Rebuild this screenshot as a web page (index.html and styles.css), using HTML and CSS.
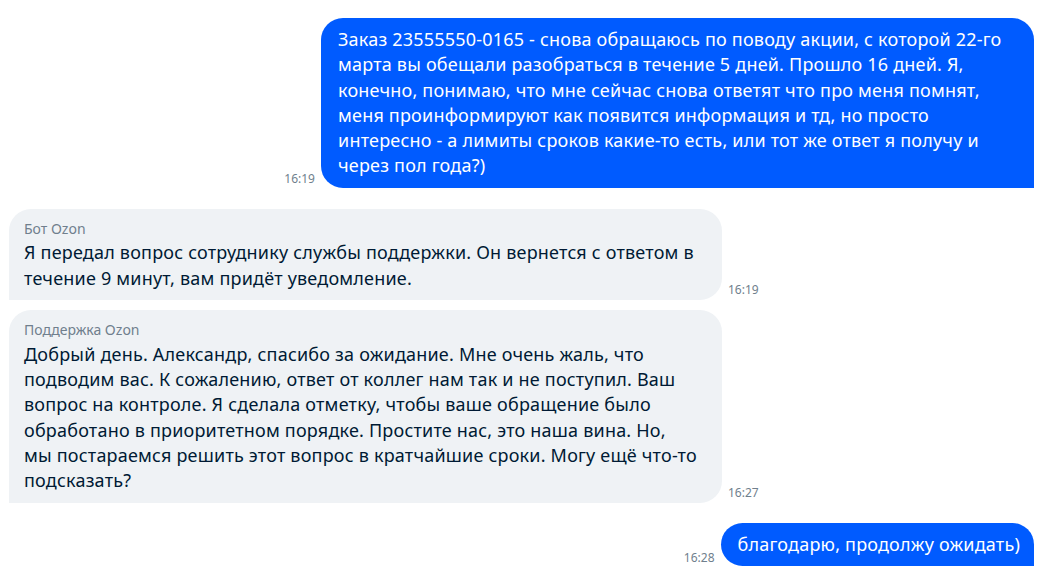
FILE: index.html
```html
<!DOCTYPE html>
<html lang="ru">
<head>
<meta charset="utf-8">
<title>Чат поддержки</title>
<link rel="stylesheet" href="styles.css">
</head>
<body>
<div class="chat">
  <div class="msg msg-out">
    <span class="time">16:19</span>
    <div class="bubble bubble-full">Заказ 23555550-0165 - снова обращаюсь по поводу акции, с которой 22-го<br>марта вы обещали разобраться в течение 5 дней. Прошло 16 дней. Я,<br>конечно, понимаю, что мне сейчас снова ответят что про меня помнят,<br>меня проинформируют как появится информация и тд, но просто<br>интересно - а лимиты сроков какие-то есть, или тот же ответ я получу и<br>через пол года?)</div>
  </div>
  <div class="msg msg-in">
    <div class="bubble bubble-full">
      <div class="author">Бот Ozon</div>
      <div class="text">Я передал вопрос сотруднику службы поддержки. Он вернется с ответом в<br>течение 9 минут, вам придёт уведомление.</div>
    </div>
    <span class="time">16:19</span>
  </div>
  <div class="msg msg-in msg-group">
    <div class="bubble bubble-full">
      <div class="author">Поддержка Ozon</div>
      <div class="text">Добрый день. Александр, спасибо за ожидание. Мне очень жаль, что<br>подводим вас. К сожалению, ответ от коллег нам так и не поступил. Ваш<br>вопрос на контроле. Я сделала отметку, чтобы ваше обращение было<br>обработано в приоритетном порядке. Простите нас, это наша вина. Но,<br>мы постараемся решить этот вопрос в кратчайшие сроки. Могу ещё что-то<br>подсказать?</div>
    </div>
    <span class="time">16:27</span>
  </div>
  <div class="msg msg-out">
    <span class="time">16:28</span>
    <div class="bubble">благодарю, продолжу ожидать)</div>
  </div>
</div>
</body>
</html>
```

FILE: styles.css
```css
html, body {
  margin: 0;
  padding: 0;
  background: #ffffff;
}

body {
  font-family: "Noto Sans", "Open Sans", sans-serif;
  color: #001a34;
}

.chat {
  display: flex;
  flex-direction: column;
  padding: 18px 15px 0 9px;
}

.msg {
  display: flex;
  align-items: flex-end;
  gap: 6px;
  margin-top: 21px;
}

.msg:first-child {
  margin-top: 0;
}

.msg-group {
  margin-top: 10px;
}

.msg:last-child {
  margin-top: 20px;
}

.msg-out {
  justify-content: flex-end;
}

.msg-in {
  justify-content: flex-start;
}

.bubble {
  max-width: 713px;
  box-sizing: border-box;
  font-size: 18px;
  letter-spacing: 0.2px;
  line-height: 25.3px;
  padding: 9px 14px 9px 17px;
  border-radius: 22px;
}

.bubble-full {
  width: 713px;
}

.msg-out .bubble {
  background: #005bff;
  color: #ffffff;
  border-bottom-right-radius: 0;
}

.msg-in .bubble {
  background: #eff2f5;
  color: #001a34;
  border-bottom-left-radius: 0;
  padding: 11px 18px 9.5px 15px;
}

.author {
  font-size: 14px;
  letter-spacing: 0;
  line-height: 18px;
  color: #707f8d;
  margin-bottom: 2.5px;
}

.time {
  font-size: 12px;
  line-height: 14px;
  color: #707f8d;
  margin-bottom: 1.5px;
  flex: none;
}

.msg-in .time {
  margin-bottom: 3.5px;
}
```
